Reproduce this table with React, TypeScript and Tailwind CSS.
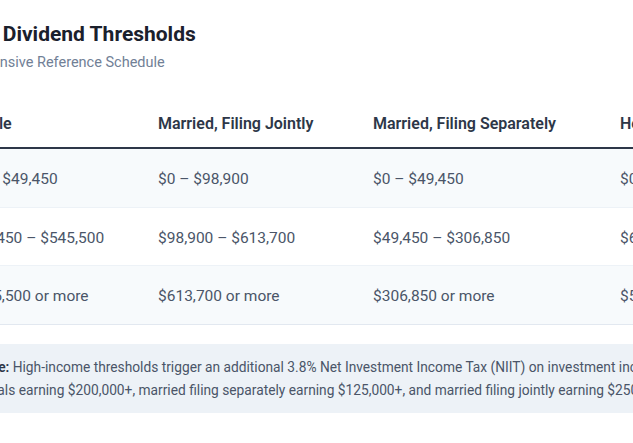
import React from "react";

const font = { fontFamily: '"Segoe UI", Roboto, sans-serif' };

const rows = [
  { rate: "0%", single: "$0 – $49,450", joint: "$0 – $98,900", separate: "$0 – $49,450", head: "$0 – $66,200" },
  { rate: "15%", single: "$49,450 – $545,500", joint: "$98,900 – $613,700", separate: "$49,450 – $306,850", head: "$66,200 – $579,600" },
  { rate: "20%", single: "$545,500 or more", joint: "$613,700 or more", separate: "$306,850 or more", head: "$579,600 or more" },
];

export default function App() {
  return (
    <div className="w-[633px] h-[443px] overflow-hidden bg-white" style={font}>
      {/* the view is scrolled: the page is wider than the window */}
      <div className="-ml-[98px] w-[1000px]">
        <header className="pl-[11px] pt-5">
          <h1 className="text-[21px] leading-7 font-bold text-[#1a202c]">Qualified Dividend Thresholds</h1>
          <p className="mt-[5px] pl-[20px] text-[14.5px] leading-5 text-[#718096]">Comprehensive Reference Schedule</p>
        </header>

        <table className="mt-[26px] table-fixed w-[922px] border-collapse text-left">
          <colgroup>
            <col className="w-[49px]" />
            <col className="w-[191px]" />
            <col className="w-[215px]" />
            <col className="w-[247px]" />
            <col className="w-[220px]" />
          </colgroup>
          <thead>
            <tr className="border-b-2 border-[#2d3748] text-[16px] leading-6 font-semibold text-[#2d3748]">
              <th className="px-3 pt-3 pb-3 font-semibold">Rate</th>
              <th className="px-4 pt-[13px] pb-[11px] font-semibold">Single</th>
              <th className="px-4 pt-[13px] pb-[11px] font-semibold">Married, Filing Jointly</th>
              <th className="px-4 pt-[13px] pb-[11px] font-semibold">Married, Filing Separately</th>
              <th className="px-4 pt-[13px] pb-[11px] font-semibold whitespace-nowrap">Head of Household</th>
            </tr>
          </thead>
          <tbody className="text-[15.5px] leading-[25.6px] text-[#4a5568]">
            {rows.map((r, i) => (
              <tr
                key={r.rate}
                className={`border-b ${i === rows.length - 1 ? "border-[#e2e8f0]" : "border-[#edf2f7]"} ${i % 2 === 0 ? "bg-[#f7fafc]" : "bg-white"}`}
              >
                <td className="px-3 pt-[18px] pb-[14px]">{r.rate}</td>
                <td className="px-4 pt-[18px] pb-[14px] whitespace-nowrap">{r.single}</td>
                <td className="px-4 pt-[18px] pb-[14px] whitespace-nowrap">{r.joint}</td>
                <td className="px-4 pt-[18px] pb-[14px] whitespace-nowrap">{r.separate}</td>
                <td className="px-4 pt-[18px] pb-[14px] whitespace-nowrap">{r.head}</td>
              </tr>
            ))}
          </tbody>
        </table>

        <p className="mt-[19px] ml-[28px] w-[790px] bg-[#edf2f7] px-5 pt-3 pb-[11px] indent-[26px] text-[13.75px] leading-[23px] text-[#4a5568]">
          <span className="font-semibold text-[#2d3748]">Note:</span> High-income thresholds trigger an additional 3.8% Net
          Investment Income Tax (NIIT) on investment income for individuals earning $200,000+, married filing separately
          earning $125,000+, and married filing jointly earning $250,000+.
        </p>
      </div>
    </div>
  );
}
